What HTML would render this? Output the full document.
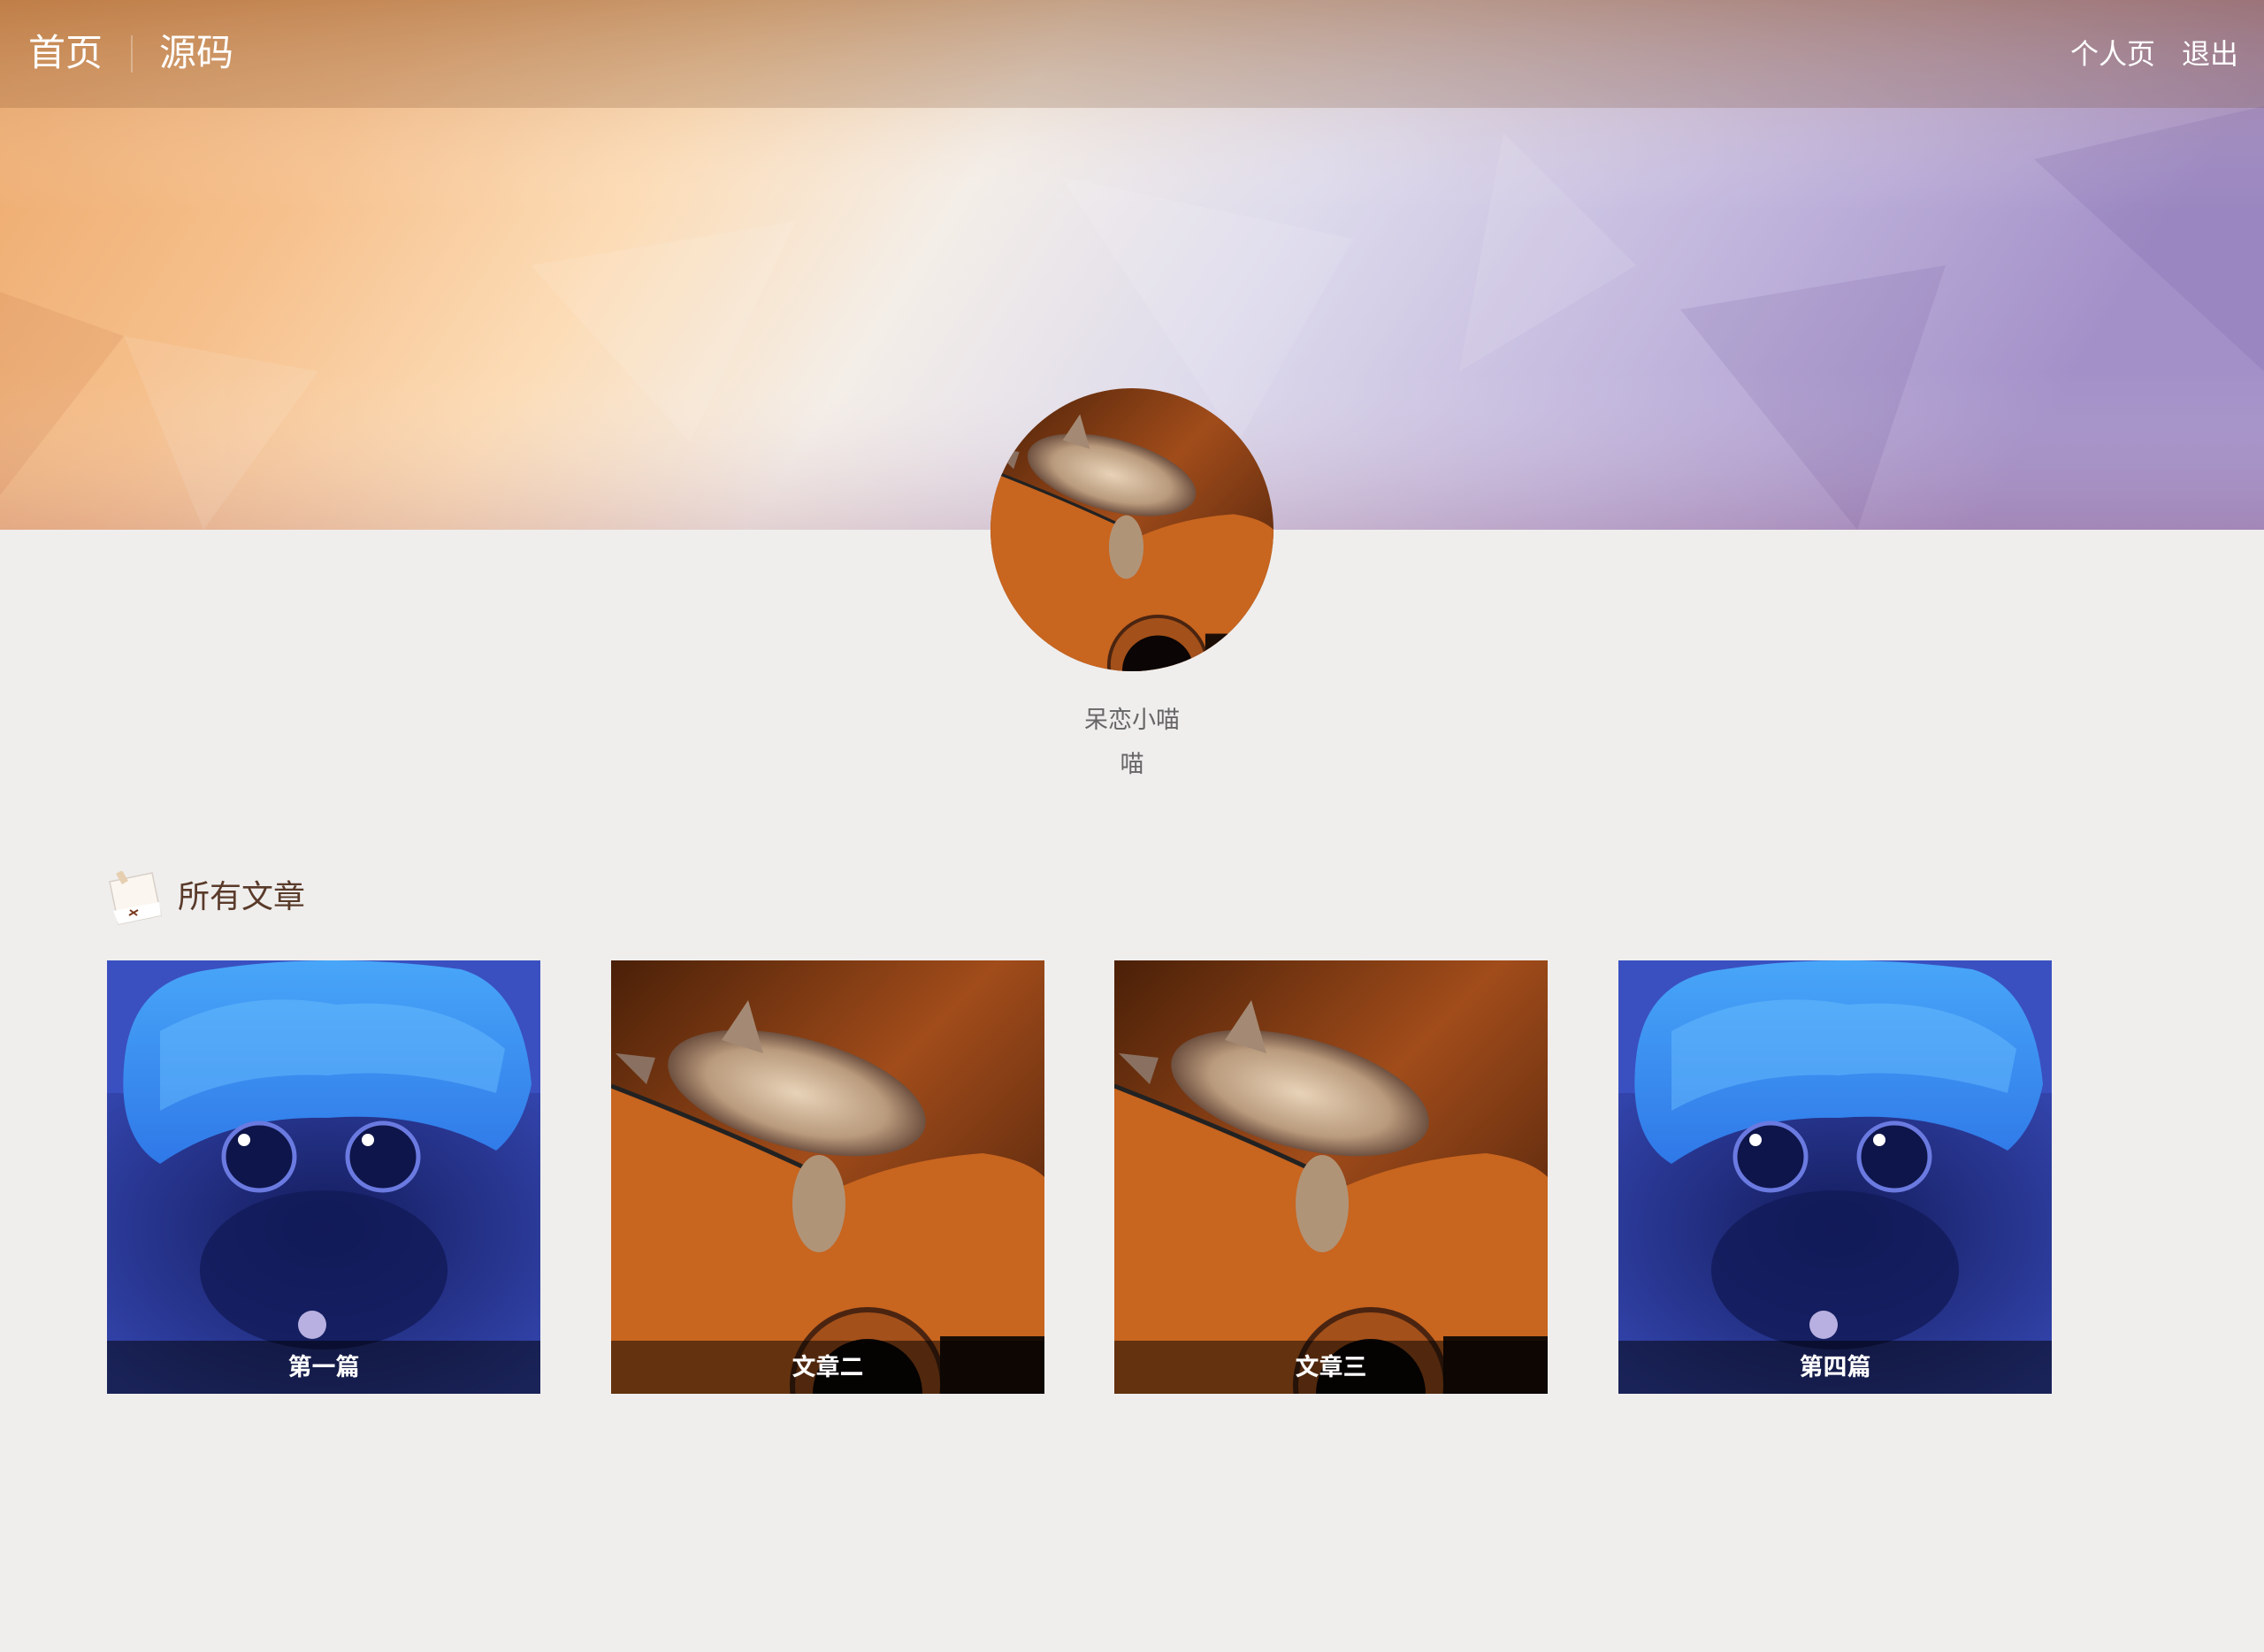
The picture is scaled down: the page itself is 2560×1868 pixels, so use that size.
<!DOCTYPE html>
<html><head><meta charset="utf-8">
<style>
*{margin:0;padding:0;box-sizing:border-box}
body{width:2560px;height:1868px;background:#efeeed;font-family:"Liberation Sans","Noto Sans CJK SC",sans-serif;position:relative;overflow:hidden}
.banner{position:absolute;left:0;top:0;width:2560px;height:599px;overflow:hidden}
.nav{position:absolute;left:0;top:0;width:2560px;height:122px;background:rgba(110,60,25,0.2)}
.nav .l{position:absolute;left:32px;top:32px;color:#fff;font-size:42px;line-height:56px}
.nav .sep{position:absolute;left:148px;top:40px;width:2px;height:42px;background:rgba(255,255,255,0.3)}
.nav .r{position:absolute;top:40px;color:#fff;font-size:32px;line-height:42px}
.avatar{position:absolute;left:1120px;top:439px;width:320px;height:320px;border-radius:50%;overflow:hidden}
.name{position:absolute;left:0;width:2560px;text-align:center;color:#666;font-size:27px}
.head{position:absolute;left:201px;top:990px;font-size:36px;color:#5a3a2a;line-height:48px}
.card{position:absolute;top:1086px;width:490px;height:490px;overflow:hidden}
.card svg{display:block}
.cap{position:absolute;left:0;bottom:0;width:490px;height:60px;background:rgba(0,0,0,0.5);color:#fff;font-weight:bold;font-size:27px;line-height:60px;text-align:center}
</style></head><body>
<svg width="0" height="0" style="position:absolute">
<defs>
<linearGradient id="bg1" x1="0" y1="0" x2="1" y2="1"><stop offset="0" stop-color="#4a2008"/><stop offset="0.45" stop-color="#a14c1a"/><stop offset="1" stop-color="#3a1808"/></linearGradient>
<radialGradient id="cat1" cx="0.5" cy="0.5" r="0.5"><stop offset="0" stop-color="#e8d3b8"/><stop offset="0.7" stop-color="#b99a7c"/><stop offset="1" stop-color="#6e5040"/></radialGradient>
<linearGradient id="hat" x1="0" y1="0" x2="0" y2="1"><stop offset="0" stop-color="#48a6f8"/><stop offset="1" stop-color="#2f78e8"/></linearGradient>
<radialGradient id="bcat" cx="0.5" cy="0.45" r="0.7"><stop offset="0" stop-color="#141c5c"/><stop offset="1" stop-color="#3446b0"/></radialGradient>
<symbol id="guitar" viewBox="0 0 490 490">
<rect width="490" height="490" fill="url(#bg1)"/>
<path d="M0 142 Q150 200 262 255 Q330 225 420 218 Q470 225 490 245 L490 490 L0 490 Z" fill="#c8651f"/>
<path d="M0 142 Q150 200 262 255" stroke="#222" stroke-width="5" fill="none"/>
<ellipse cx="210" cy="150" rx="150" ry="62" fill="url(#cat1)" transform="rotate(15 210 150)"/>
<ellipse cx="235" cy="275" rx="30" ry="55" fill="#b09478"/>
<path d="M125 90 L155 45 L172 105 Z" fill="#a48a74"/>
<path d="M5 105 L50 110 L40 140 Z" fill="#8a7060"/>
<circle cx="290" cy="480" r="85" fill="#a3501a" stroke="#4a2410" stroke-width="6"/>
<circle cx="290" cy="490" r="62" fill="#0b0505"/>
<rect x="372" y="425" width="118" height="65" fill="#1a0d06"/>
</symbol>
<symbol id="bluecat" viewBox="0 0 490 490">
<rect width="490" height="490" fill="#3a50c0"/>
<rect y="150" width="490" height="340" fill="url(#bcat)"/>
<path d="M20 110 Q30 20 120 10 Q250 -10 400 10 Q470 30 480 140 Q470 190 440 215 Q360 170 250 178 Q140 175 60 230 Q10 200 20 110 Z" fill="url(#hat)"/>
<path d="M60 80 Q150 30 260 50 Q380 40 450 100 L440 150 Q340 120 250 130 Q140 125 60 170 Z" fill="#6cc0ff" opacity="0.45"/>
<ellipse cx="172" cy="222" rx="40" ry="38" fill="#0e154a" stroke="#6a7ae0" stroke-width="5"/>
<ellipse cx="312" cy="222" rx="40" ry="38" fill="#0e154a" stroke="#6a7ae0" stroke-width="5"/>
<circle cx="155" cy="203" r="7" fill="#fff"/><circle cx="295" cy="203" r="7" fill="#fff"/>
<ellipse cx="245" cy="350" rx="140" ry="90" fill="#121a58" opacity="0.8"/>
<circle cx="232" cy="412" r="16" fill="#b8b0e0"/>
</symbol>
</defs></svg>

<div class="banner">
<svg width="2560" height="599" viewBox="0 0 2560 599">
<defs>
<linearGradient id="bn" x1="0" y1="0" x2="1" y2="0.15">
<stop offset="0" stop-color="#eca86a"/><stop offset="0.18" stop-color="#f6c08c"/><stop offset="0.33" stop-color="#fcdcb6"/><stop offset="0.47" stop-color="#f4eee8"/><stop offset="0.62" stop-color="#dedbec"/><stop offset="0.82" stop-color="#c0b4dc"/><stop offset="1" stop-color="#a390c8"/>
</linearGradient>
<linearGradient id="bv" x1="0" y1="0" x2="0" y2="1"><stop offset="0" stop-color="#a86028" stop-opacity="0.35"/><stop offset="0.4" stop-color="#fff" stop-opacity="0"/><stop offset="0.7" stop-color="#fff" stop-opacity="0"/><stop offset="1" stop-color="#a06078" stop-opacity="0.2"/></linearGradient>
</defs>
<rect width="2560" height="599" fill="url(#bn)"/>
<rect width="2560" height="599" fill="url(#bv)"/>
<g opacity="0.1">
<polygon points="0,330 140,380 0,560" fill="#b0502a"/>
<polygon points="140,380 360,420 230,599" fill="#fff"/>
<polygon points="600,300 900,250 780,500" fill="#fff"/>
<polygon points="1200,200 1530,270 1400,500" fill="#fff"/>
<polygon points="1900,350 2200,300 2100,599" fill="#503080"/>
<polygon points="2300,180 2560,120 2560,420" fill="#503080"/>
<polygon points="1700,150 1850,300 1650,420" fill="#fff"/>
</g>
</svg>
</div>
<div class="nav">
<div class="l">首页</div><div class="sep"></div><div class="l" style="left:180px">源码</div>
<div class="r" style="left:2341px">个人页</div><div class="r" style="left:2467px">退出</div>
</div>
<div class="avatar"><svg width="320" height="320" viewBox="0 0 490 490"><use href="#guitar" width="490" height="490"/></svg></div>
<div class="name" style="top:792px">呆恋小喵</div>
<div class="name" style="top:842px">喵</div>

<svg style="position:absolute;left:120px;top:985px" width="64" height="64" viewBox="0 0 64 64">
<polygon points="4,12 52,2 62,50 14,60" fill="#fbf6ef" stroke="#d8cfc8" stroke-width="1.5"/>
<polygon points="8,45 60,35 62,50 14,60" fill="#fff"/>
<rect x="14" y="0" width="8" height="14" fill="#e6cfb0" transform="rotate(-30 18 7)"/>
<path d="M26 50 L36 44 M27 44 L35 50" stroke="#7a3a20" stroke-width="2"/>
</svg>
<div class="head">所有文章</div>

<div class="card" style="left:121px"><svg width="490" height="490"><use href="#bluecat" width="490" height="490"/></svg><div class="cap">第一篇</div></div>
<div class="card" style="left:691px"><svg width="490" height="490"><use href="#guitar" width="490" height="490"/></svg><div class="cap">文章二</div></div>
<div class="card" style="left:1260px"><svg width="490" height="490"><use href="#guitar" width="490" height="490"/></svg><div class="cap">文章三</div></div>
<div class="card" style="left:1830px"><svg width="490" height="490"><use href="#bluecat" width="490" height="490"/></svg><div class="cap">第四篇</div></div>
</body></html>
